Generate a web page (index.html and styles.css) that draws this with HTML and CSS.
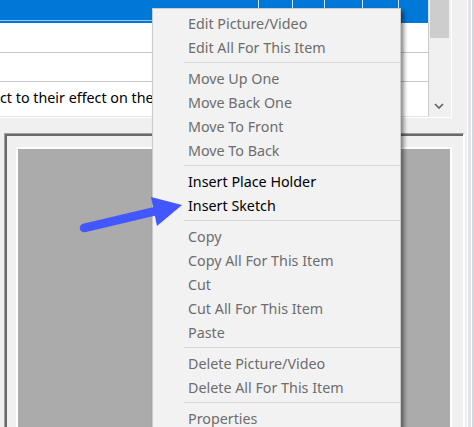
FILE: index.html
```html
<!DOCTYPE html>
<html>
<head>
<meta charset="utf-8">
<link rel="stylesheet" href="styles.css">
</head>
<body>
<div class="window">
  <div class="main">
    <div class="listbox">
      <div class="grid">
        <div class="row sel">
          <div class="cell c1 focus"></div><div class="cell c2"></div><div class="cell c3"></div><div class="cell c4"></div><div class="cell c5"></div><div class="cell c6"></div>
        </div>
        <div class="row r1">
          <div class="cell c1"></div><div class="cell c2"></div><div class="cell c3"></div><div class="cell c4"></div><div class="cell c5"></div><div class="cell c6"></div>
        </div>
        <div class="row r2">
          <div class="cell c1"></div><div class="cell c2"></div><div class="cell c3"></div><div class="cell c4"></div><div class="cell c5"></div><div class="cell c6"></div>
        </div>
        <div class="row r3">
          <div class="cell c1"><span class="txt">ct to their effect on the</span></div><div class="cell c2"></div><div class="cell c3"></div><div class="cell c4"></div><div class="cell c5"></div><div class="cell c6"></div>
        </div>
      </div>
      <div class="vscroll">
        <div class="thumb"></div>
        <div class="down">
          <svg width="10" height="6" viewBox="0 0 10 6"><polyline points="1,1 5,5 9,1" fill="none" stroke="#606060" stroke-width="1.6"/></svg>
        </div>
      </div>
    </div>
    <div class="panel">
      <div class="panel-inner">
        <div class="canvas"></div>
      </div>
    </div>
  </div>
  <div class="frame-edge"></div>
</div>

<div class="menu">
  <div class="item">Edit Picture/Video</div>
  <div class="item">Edit All For This Item</div>
  <div class="sep"></div>
  <div class="item">Move Up One</div>
  <div class="item">Move Back One</div>
  <div class="item">Move To Front</div>
  <div class="item">Move To Back</div>
  <div class="sep"></div>
  <div class="item on">Insert Place Holder</div>
  <div class="item on">Insert Sketch</div>
  <div class="sep"></div>
  <div class="item">Copy</div>
  <div class="item">Copy All For This Item</div>
  <div class="item">Cut</div>
  <div class="item">Cut All For This Item</div>
  <div class="item">Paste</div>
  <div class="sep"></div>
  <div class="item">Delete Picture/Video</div>
  <div class="item">Delete All For This Item</div>
  <div class="sep"></div>
  <div class="item">Properties</div>
</div>

<svg class="arrow" width="474" height="427" viewBox="0 0 474 427">
  <line x1="84" y1="228" x2="156" y2="211" stroke="#4257ff" stroke-width="8.5" stroke-linecap="round"/>
  <polygon points="151,197 182,205 157,226" fill="#4257ff"/>
</svg>
</body>
</html>
```

FILE: styles.css
```css
html, body {
  margin: 0;
  padding: 0;
}

body {
  width: 474px;
  height: 427px;
  overflow: hidden;
  position: relative;
  background: #f0f0f0;
  font-family: "Noto Sans", "Open Sans", sans-serif;
  font-size: 14.3px;
}

.window {
  display: flex;
  height: 427px;
}

.main {
  width: 465px;
  display: flex;
  flex-direction: column;
}

.listbox {
  width: 452px;
  height: 118px;
  box-sizing: border-box;
  display: flex;
  border-right: 1px solid #ffffff;
  border-bottom: 1px solid #ffffff;
  flex-shrink: 0;
}

.grid {
  width: 429px;
  background: #ffffff;
  display: flex;
  flex-direction: column;
  border-bottom: 1px solid #e2e2e2;
}

.row {
  display: flex;
  box-sizing: border-box;
}

.row.sel {
  height: 23px;
  background: #0078d7;
}

.row.r1 {
  height: 30px;
  border-bottom: 1px solid #c8c8c8;
}

.row.r2 {
  height: 29px;
  border-bottom: 1px solid #c8c8c8;
}

.row.r3 {
  flex: 1;
}

.cell {
  box-sizing: border-box;
  border-right: 1px solid #c8c8c8;
  height: 100%;
}

.row.sel .cell {
  border-right-color: #cfe3f5;
}

.c1 { width: 259px; }
.c2 { width: 34px; }
.c3 { width: 32px; }
.c4 { width: 38px; }
.c5 { width: 36px; }
.c6 { width: 30px; }

.focus {
  position: relative;
}

.focus::after {
  content: "";
  position: absolute;
  left: 0;
  right: 0;
  bottom: 2px;
  height: 1px;
  background: #9cc8f0;
}

.txt {
  display: block;
  white-space: nowrap;
  padding-top: 1px;
  line-height: 30px;
  color: #000000;
}

.vscroll {
  width: 22px;
  background: #f0f0f0;
  display: flex;
  flex-direction: column;
  justify-content: space-between;
}

.thumb {
  margin-left: 1px;
  width: 19px;
  height: 38px;
  background: #cdcdcd;
}

.down {
  height: 22px;
  display: flex;
  align-items: center;
  justify-content: center;
  padding-right: 2px;
}

.down svg {
  display: block;
}

.panel {
  margin-top: 15px;
  margin-left: 4px;
  flex: 1;
  border-top: 1px solid #a0a0a0;
  border-left: 1px solid #a0a0a0;
  border-right: 2px solid #ffffff;
  display: flex;
}

.panel-inner {
  flex: 1;
  border-top: 2px solid #696969;
  border-left: 2px solid #696969;
  padding: 11px 0 0 9px;
  display: flex;
}

.canvas {
  width: 436px;
  box-sizing: border-box;
  background: #ababab;
  border-top: 2px solid #ffffff;
  border-left: 2px solid #ffffff;
  border-right: 2px solid #ffffff;
}

.frame-edge {
  width: 9px;
  background: linear-gradient(to right,
    #f0f0f0 0, #f0f0f0 2px,
    #ffffff 2px, #ffffff 3px,
    #e4e4e4 3px, #e4e4e4 6px,
    #ffffff 6px, #ffffff 7px,
    #d2d9e2 7px, #d2d9e2 9px);
}

.menu {
  position: absolute;
  left: 152px;
  top: 8px;
  width: 249px;
  box-sizing: border-box;
  background: #f2f2f2;
  border: 1px solid #cccccc;
  padding: 2px 0;
  box-shadow: 3px 3px 4px rgba(0, 0, 0, 0.45);
}

.item {
  height: 24px;
  line-height: 25px;
  padding-left: 35px;
  color: #6d6d6d;
  white-space: nowrap;
}

.item.on {
  color: #000000;
}

.sep {
  height: 1px;
  margin: 3px 0 3px 31px;
  background: #d7d7d7;
}

.arrow {
  position: absolute;
  left: 0;
  top: 0;
  pointer-events: none;
}
```
